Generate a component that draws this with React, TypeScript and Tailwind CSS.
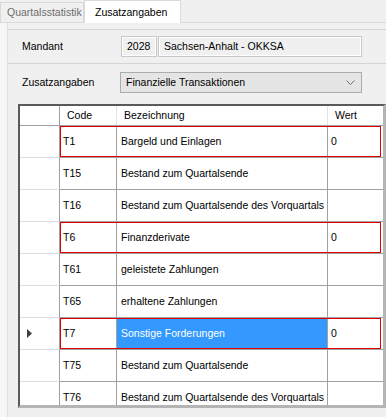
import React from "react";

type Row = { code: string; name: string; wert?: string; red?: boolean; selected?: boolean };

const rows: Row[] = [
  { code: "T1", name: "Bargeld und Einlagen", wert: "0", red: true },
  { code: "T15", name: "Bestand zum Quartalsende" },
  { code: "T16", name: "Bestand zum Quartalsende des Vorquartals" },
  { code: "T6", name: "Finanzderivate", wert: "0", red: true },
  { code: "T61", name: "geleistete Zahlungen" },
  { code: "T65", name: "erhaltene Zahlungen" },
  { code: "T7", name: "Sonstige Forderungen", wert: "0", red: true, selected: true },
  { code: "T75", name: "Bestand zum Quartalsende" },
  { code: "T76", name: "Bestand zum Quartalsende des Vorquartals" },
];

export default function App() {
  return (
    <div
      className="w-[386px] h-[417px] overflow-hidden bg-[#f0f0f0] text-[10.5px] text-black flex flex-col"
      style={{ fontFamily: '"Liberation Sans", Arial, sans-serif' }}
    >
      {/* Tab strip */}
      <div className="h-[23px] flex items-end border-b border-[#d9d9d9] shrink-0">
        <div className="h-[20px] w-[84px] border border-b-0 border-[#d9d9d9] bg-[#f0f0f0] text-[#6d6d6d] flex items-center pl-[6px] leading-none">
          Quartalsstatistik
        </div>
        <div className="h-[23px] w-[97px] border border-b-0 border-[#d9d9d9] bg-white flex items-center pl-[10px] leading-none -mb-px">
          Zusatzangaben
        </div>
      </div>

      {/* Page */}
      <div className="flex flex-1 min-h-0">
        <div className="w-[8px] bg-[#f7f7f7] border-r border-[#e0e0e0] shrink-0" />
        <div className="flex-1 min-w-0 flex flex-col pt-[6px]">
          {/* Mandant group */}
          <div className="h-[35px] border-t border-b border-[#d5d5d5] flex items-center pl-[14px] shrink-0">
            <div className="w-[99px]">Mandant</div>
            <div className="h-[21px] w-[36px] border border-[#c8c8c8] bg-[#f0f0f0] shadow-[inset_0_0_0_1px_#ffffff] flex items-center pl-[5px]">
              2028
            </div>
            <div className="h-[21px] w-[204px] ml-px border border-[#c8c8c8] bg-[#f0f0f0] shadow-[inset_0_0_0_1px_#ffffff] flex items-center pl-[5px]">
              Sachsen-Anhalt - OKKSA
            </div>
          </div>

          {/* Zusatzangaben */}
          <div className="flex items-center pl-[14px] pt-[8px] shrink-0">
            <div className="w-[98px]">Zusatzangaben</div>
            <div className="h-[21px] w-[242px] border border-[#adadad] bg-[#e5e5e5] flex items-center pl-[5px] pr-[5px] justify-between">
              <span>Finanzielle Transaktionen</span>
              <svg width="9" height="6" viewBox="0 0 9 6" className="mr-[1px]">
                <polyline points="0.5,0.5 4.5,4.5 8.5,0.5" fill="none" stroke="#707070" strokeWidth="1" />
              </svg>
            </div>
          </div>

          {/* Grid */}
          <div className="mt-[11px] ml-[10px] h-[304px] border-l-2 border-t-2 border-[#5a5a5a] border-r-[3px] border-r-[#b4b4b4] border-b-[3px] border-b-[#b4b4b4] bg-white overflow-hidden shrink-0">
            {/* Header */}
            <div className="flex h-[20px] border-b border-[#a0a0a0]">
              <div className="w-[40px] border-r border-[#a0a0a0]" />
              <div className="w-[57px] border-r border-[#e3e3e3] pl-[7px] flex items-center">Code</div>
              <div className="w-[211px] border-r border-[#e3e3e3] pl-[7px] flex items-center">Bezeichnung</div>
              <div className="flex-1 pl-[7px] flex items-center">Wert</div>
            </div>
            {rows.map((r) => (
              <div key={r.code} className="relative flex h-[32px]">
                <div className="w-[40px] border-r border-b border-r-[#a0a0a0] border-b-[#dedede] bg-white flex items-center pl-[7px]">
                  {r.selected && (
                    <svg width="6" height="9" viewBox="0 0 6 9">
                      <polygon points="0,0 5,4.5 0,9" fill="#404040" />
                    </svg>
                  )}
                </div>
                <div className="w-[57px] border-r border-b border-[#a0a0a0] pl-[3px] flex items-center">{r.code}</div>
                <div
                  className={
                    r.selected
                      ? "w-[211px] border-r border-b border-[#a0a0a0] pl-[4px] flex items-center bg-[#3399ff] text-white"
                      : "w-[211px] border-r border-b border-[#a0a0a0] pl-[4px] flex items-center"
                  }
                >
                  {r.name}
                </div>
                <div className="flex-1 border-b border-[#a0a0a0] pl-[3px] flex items-center">{r.wert ?? ""}</div>
                {r.red && (
                  <div className="absolute left-[40px] right-[2px] top-0 bottom-px border border-[#e00000] pointer-events-none" />
                )}
              </div>
            ))}
          </div>
        </div>
      </div>
    </div>
  );
}
